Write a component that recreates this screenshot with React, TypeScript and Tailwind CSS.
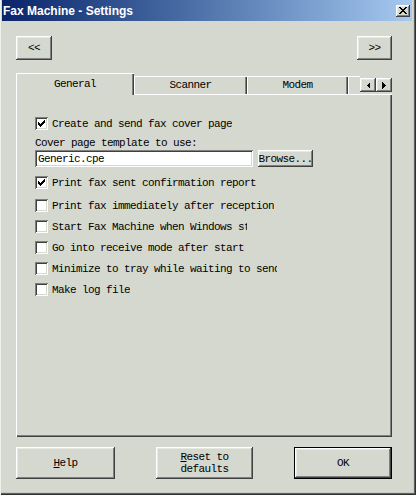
import React from 'react'

const mono = "font-['Liberation_Mono',monospace] text-[11px] tracking-[-0.6px] text-black leading-[12px]"
const raised = "bg-[#d5d8cf] shadow-[inset_-1px_-1px_#404040,inset_1px_1px_#ffffff,inset_-2px_-2px_#808080,inset_2px_2px_#e6e9e1]"
const sunken = "bg-white shadow-[inset_1px_1px_#808080,inset_-1px_-1px_#ffffff,inset_2px_2px_#404040,inset_-2px_-2px_#d5d8cf]"

// 7x7 classic check glyph
const checkPixels = [
    [6, 0, 1], [5, 1, 2], [0, 2, 1], [4, 2, 3], [0, 3, 2], [3, 3, 3], [0, 4, 5], [1, 5, 3], [2, 6, 1],
]

const CheckBox = ({ checked, label, clip }: { checked?: boolean; label: string; clip?: string }) => (
    <div className="flex items-center h-[13px] pl-[19px]">
        <div className={`w-[13px] h-[13px] shrink-0 flex items-center justify-center ${sunken}`}>
            {checked && (
                <svg width="7" height="7" viewBox="0 0 7 7" shapeRendering="crispEdges">
                    {checkPixels.map(([x, y, w], i) => (
                        <rect key={i} x={x} y={y} width={w} height={1} fill="#000" />
                    ))}
                </svg>
            )}
        </div>
        <span className={`ml-[4px] whitespace-nowrap overflow-hidden ${clip ?? ''} ${mono}`}>{label}</span>
    </div>
)

const Tab = ({ label, width, selected }: { label: string; width: string; selected?: boolean }) => (
    <div
        className={`${width} flex items-center justify-center ${mono} ${
            selected
                ? 'relative z-10 h-[22px] -mb-[1px] bg-[#d5d8cf] shadow-[inset_1px_1px_#ffffff,inset_-1px_0_#404040,inset_-2px_0_#808080]'
                : 'h-[18px] bg-[#d5d8cf] shadow-[inset_1px_1px_#ffffff,inset_-1px_0_#404040,inset_-2px_0_#808080]'
        }`}
    >
        <span>{label}</span>
    </div>
)

const App = () => {
    return (
        <div className="w-[416px] h-[495px] bg-[#d5d8cf] pl-[2px] pr-[4px] flex flex-col shadow-[inset_1px_0_#eef0ea,inset_-1px_-1px_#303030,inset_-2px_-2px_#606060,inset_-3px_-3px_#c8cbc2]">
            {/* title bar */}
            <div className="h-[21px] w-[410px] flex items-center justify-between bg-gradient-to-r from-[#0a246a] to-[#a6caf0] pl-[1px] pr-[2px]">
                <span className="font-['Liberation_Sans',Arial,sans-serif] font-bold text-[12px] text-white">Fax Machine - Settings</span>
                <div className={`w-[14px] h-[12px] flex items-center justify-center ${raised}`}>
                    <svg width="8" height="7" viewBox="0 0 8 7" shapeRendering="crispEdges">
                        <path d="M0 0h2l2 2.2L6 0h2L5 3.5 8 7H6L4 4.8 2 7H0l3-3.5z" fill="#000" />
                    </svg>
                </div>
            </div>

            <div className="ml-[14px] w-[376px] flex flex-col">
                {/* nav buttons */}
                <div className="mt-[15px] h-[24px] flex justify-between">
                    <div className={`w-[36px] h-[24px] flex items-center justify-center ${raised} ${mono}`}>&lt;&lt;</div>
                    <div className={`w-[35px] h-[24px] flex items-center justify-center ${raised} ${mono}`}>&gt;&gt;</div>
                </div>

                {/* tabs */}
                <div className="mt-[13px] h-[21px] flex items-end">
                    <Tab label="General" width="w-[118px]" selected />
                    <Tab label="Scanner" width="w-[113px]" />
                    <Tab label="Modem" width="w-[101px]" />
                    <div className="w-[12px] h-[18px] shadow-[inset_1px_1px_#ffffff]" />
                    <div className="self-start mt-[5px] flex">
                        <div className={`w-[16px] h-[14px] flex items-center justify-center ${raised}`}>
                            <svg width="4" height="7" viewBox="0 0 4 7" shapeRendering="crispEdges">
                                <path d="M4 0v7L0.5 3.5z" fill="#000" />
                            </svg>
                        </div>
                        <div className={`w-[16px] h-[14px] flex items-center justify-center ${raised}`}>
                            <svg width="4" height="7" viewBox="0 0 4 7" shapeRendering="crispEdges">
                                <path d="M0 0v7l3.5-3.5z" fill="#000" />
                            </svg>
                        </div>
                    </div>
                </div>

                {/* panel */}
                <div className="h-[343px] flex flex-col pt-[23px] shadow-[inset_1px_1px_#ffffff,inset_-1px_-1px_#404040,inset_-2px_-2px_#808080]">
                    <CheckBox checked label="Create and send fax cover page" />
                    <div className={`mt-[7px] pl-[19px] ${mono}`}>Cover page template to use:</div>
                    <div className="mt-[1px] pl-[19px] flex items-center">
                        <div className={`w-[218px] h-[17px] flex items-center pl-[3px] ${sunken} ${mono}`}>Generic.cpe</div>
                        <div className={`ml-[5px] w-[55px] h-[17px] flex items-center justify-center overflow-hidden whitespace-nowrap ${raised} ${mono}`}>Browse...</div>
                    </div>
                    <div className="mt-[9px]">
                        <CheckBox checked label="Print fax sent confirmation report" />
                    </div>
                    <div className="mt-[10px] flex flex-col gap-[8px]">
                        <CheckBox label="Print fax immediately after reception" />
                        <CheckBox label="Start Fax Machine when Windows starts" clip="w-[195px]" />
                        <CheckBox label="Go into receive mode after start" />
                        <CheckBox label="Minimize to tray while waiting to send" clip="w-[225px]" />
                        <CheckBox label="Make log file" />
                    </div>
                </div>

                {/* bottom buttons */}
                <div className="mt-[10px] h-[32px] flex items-center">
                    <div className={`w-[99px] h-[32px] flex items-center justify-center ${raised} ${mono}`}>
                        <span><span className="underline underline-offset-[1px]">H</span>elp</span>
                    </div>
                    <div className={`ml-[41px] w-[97px] h-[32px] flex flex-col items-center justify-center text-center ${raised} ${mono}`}>
                        <span><span className="underline underline-offset-[1px]">R</span>eset to</span>
                        <span>defaults</span>
                    </div>
                    <div className="ml-[41px] w-[98px] h-[32px] border border-black">
                        <div className={`w-full h-full flex items-center justify-center ${raised} ${mono}`}>OK</div>
                    </div>
                </div>
            </div>
        </div>
    )
}

export default App
